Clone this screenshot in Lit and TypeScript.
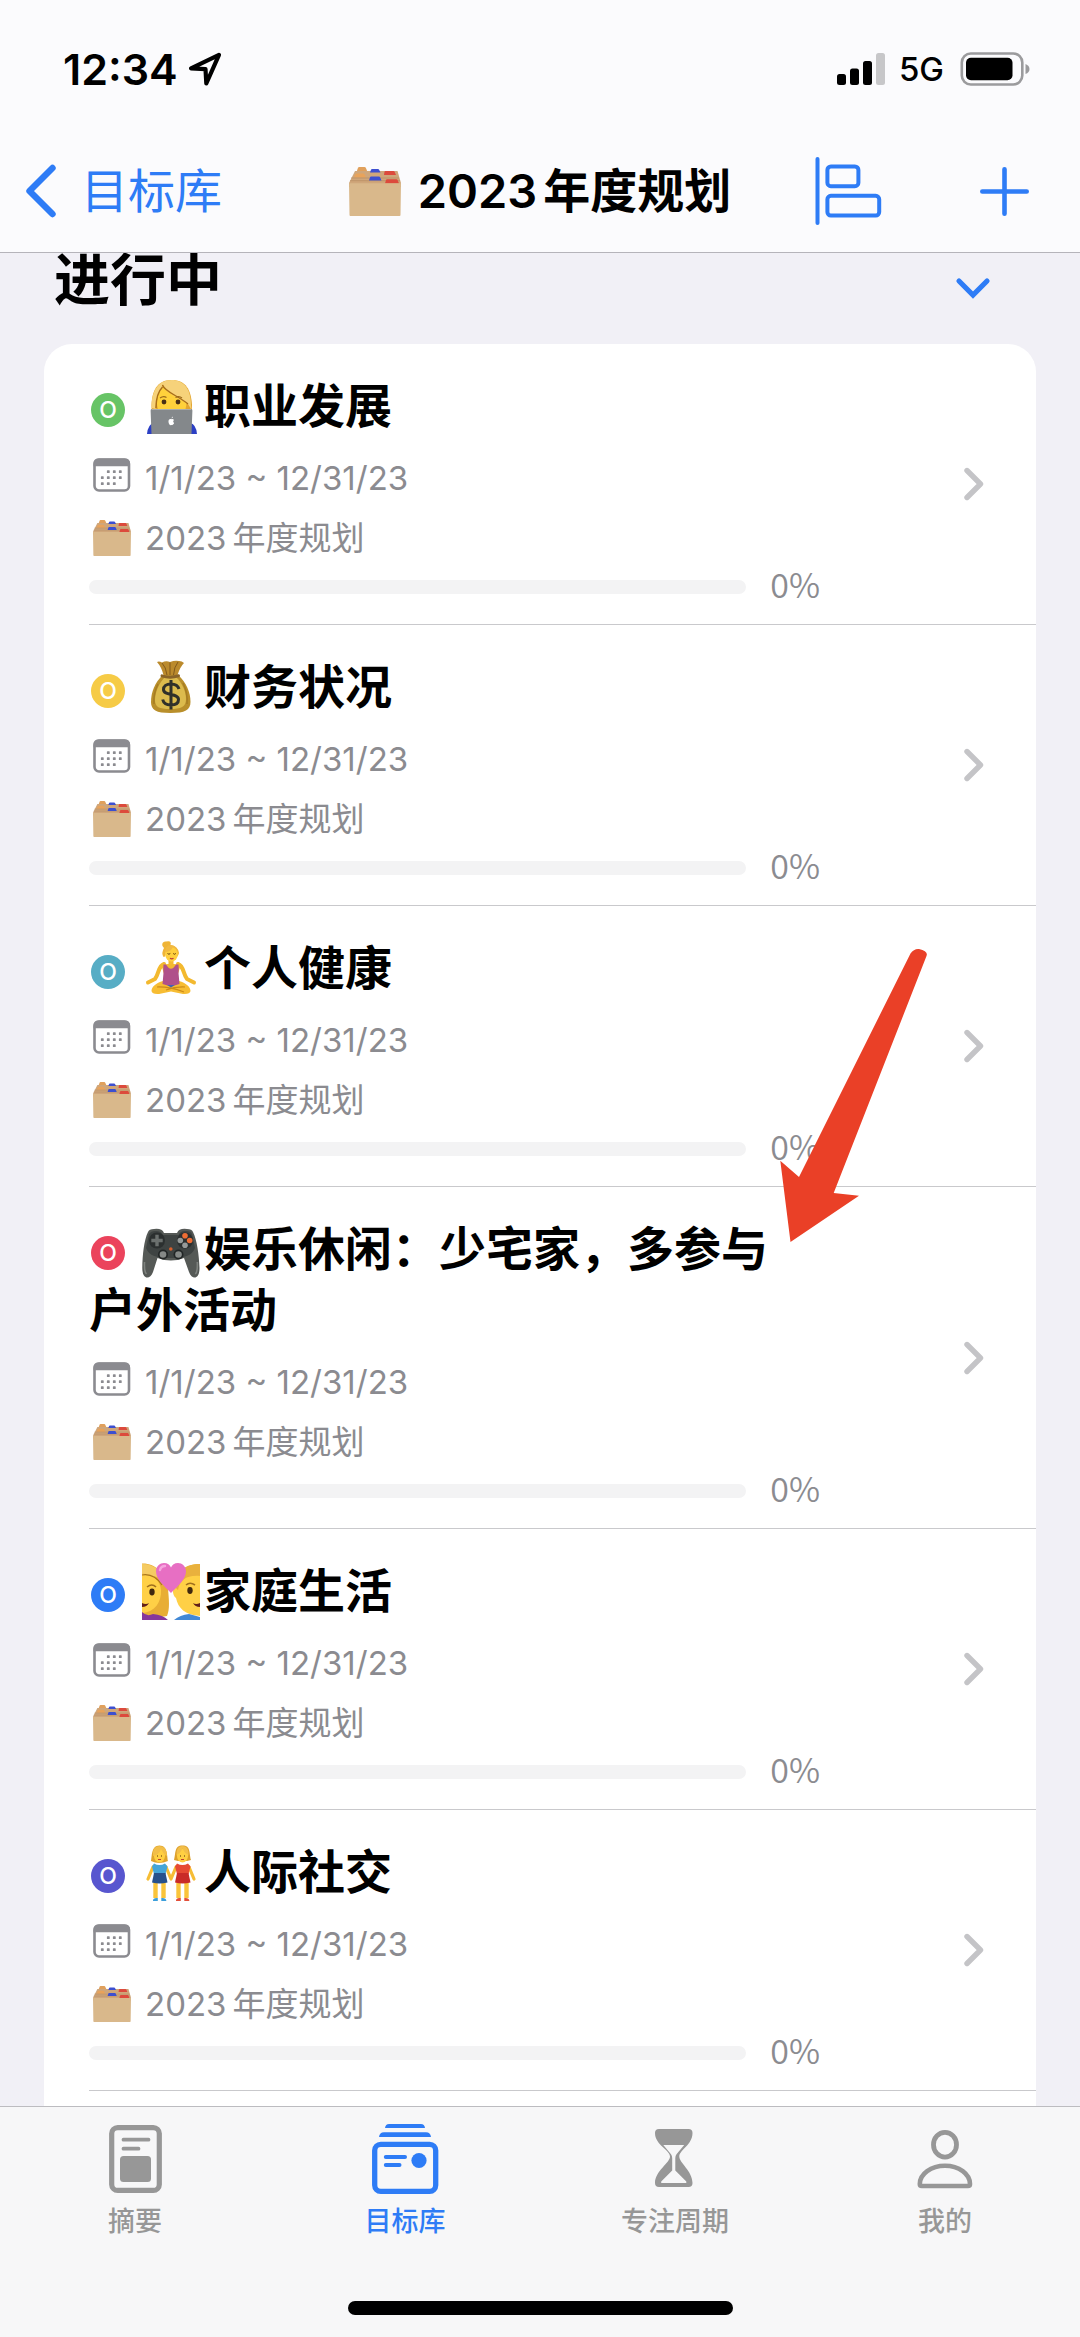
import { LitElement, html, svg, css, type TemplateResult } from "lit";
import { customElement, property } from "lit/decorators.js";
import { classMap } from "lit/directives/class-map.js";

const folderIcon = html`
  <svg class="folder" viewBox="0 0 52 49" aria-hidden="true">
    <path d="M8 3.500 9 .8Q9.400 0 10.300 0H15.500Q16.400 0 16.800.8L18 3.500V9H8Z" fill="#e0a05c" />
    <path d="M6 4H48.500L52 16V20H0V16Z" fill="#cfa67a" />
    <path d="M5 10.500 6.300 7.300Q6.700 6.500 7.600 6.500H14Q15 6.500 15.400 7.300L17 10.500Z" fill="#e8a35b" />
    <path d="M21 5.500 22 2.700Q22.300 2 23 2H29Q29.800 2 30.100 2.700L31.500 5.500Z" fill="#3c4fd0" />
    <path d="M35 8 35.500 4.800Q35.700 4 36.500 4H44.500Q45.300 4 45.600 4.800L47 8Z" fill="#dc4a3c" />
    <path d="M2 11H50M1 13.700H51" stroke="#b98f66" stroke-width=".8" />
    <path d="M20 13.500 21 10.300Q21.300 9.500 22 9.500H30Q30.800 9.500 31.100 10.300L32.500 13.500Z" fill="#3c4fd0" />
    <path d="M36 16.500 37 13.100Q37.300 12.300 38 12.300H47.500Q48.300 12.300 48.600 13.100L50 16.500Z" fill="#dc4a3c" />
    <path d="M0 16.300H52L51.500 48Q51.500 49 50.500 49H1.500Q.5 49 .5 48Z" fill="#d9b88b" />
  </svg>
`;

const calendarIcon = html`
  <svg class="calendar" viewBox="0 0 38 40" aria-hidden="true">
    <rect x="1.500" y="1.500" width="34.500" height="31" rx="4.500" fill="none" stroke="#8b8b90" stroke-width="2.600" />
    <path d="M.5 8.200V5.500Q.5.500 5.500.5H32Q37 .5 37 5.500V8.200Z" fill="#8b8b90" />
    ${[
      [15.3, 13.7], [21.3, 13.7], [27.3, 13.7],
      [9.3, 19.7], [15.3, 19.7], [21.3, 19.7], [27.3, 19.7],
      [9.3, 25.7], [15.3, 25.7], [21.3, 25.7],
    ].map(([x, y]) => svg`<rect x=${x - 1.4} y=${y - 1.4} width="2.800" height="2.800" rx=".6" fill="#8b8b90" />`)}
  </svg>
`;

const technologist = svg`
  <path d="M5 57Q6 47 12 46H48Q54 47 55 57Z" fill="#2b3fc4" />
  <path d="M29.500 3C15 3 10 14 9.500 28L10 46H49L50 28C49 13 44 3 29.500 3Z" fill="#e3a52f" />
  <path d="M29.500 8C19 8 15 17 15 26C15 34 20 42 29.500 42C39 42 44.500 35 44.500 25C44.500 15 40 8 29.500 8Z" fill="#ffd13b" />
  <path d="M20.500 7C22 15 33 19 46 27L49 32C50 12 42 3 29.500 3C16 3 9.500 14 9.500 31L13.500 32C13.500 24 15.500 16 20.500 11Z" fill="#f6d27a" />
  <path d="M20.500 8C23 15 35 18 46 27M20.500 10C15.500 15 14 23 14 31" fill="none" stroke="#a96e17" stroke-width="1.400" />
  <circle cx="22" cy="25" r="2.400" fill="#4a3015" /><circle cx="36" cy="25" r="2.400" fill="#4a3015" />
  <path d="M18 21Q21.500 18.500 24.500 20.500M33.500 20.500Q37 18.500 40 21" fill="none" stroke="#9b6a1a" stroke-width="1.200" />
  <path d="M10 32H49Q50.500 32 50.400 33.500L49.500 57H9.500L8.600 33.500Q8.600 32 10 32Z" fill="#84888b" />
  <path d="M10 32.500H49" stroke="#a9acae" stroke-width="1" />
  <path d="M29.300 42.200C27.500 41.600 26.300 43 26.500 45C26.700 47 28 48.600 29.300 48C30.700 48.600 31.800 47.200 32.100 46.100C30.900 45.300 30.900 43.700 32 43C31.300 41.900 30.300 41.800 29.300 42.200ZM29.500 41.500Q29.600 39.800 31 39.400Q31 41 29.500 41.500Z" fill="#fff" />
`;

const moneyBag = svg`
  <path d="M15 4Q17 3 20 4.500Q24 2.500 28 4Q33 2 37 3Q40 3 42 5Q38 9 35.500 17H21.500Q19.500 9 15 4Z" fill="#bb8a2c" />
  <path d="M20 5Q24 9 25 17M28 4.500V17M36 4Q32 9 31.500 17" stroke="#81591b" stroke-width="1" fill="none" />
  <path d="M21 17C13 24 9 34 9 44C9 52 14 55 28.500 55C43 55 48.500 52 48.500 44C48.500 34 44 24 36 17Z" fill="#b98f2b" />
  <path d="M23 19C17 25 13 34 13 42C13 49 17 51 28 51C39 51 44 49 44 41C44 33 40 25 34 19Z" fill="#dcbb4d" />
  <path d="M16 26Q11 36 12 46M41 25Q46 35 45 46" stroke="#a67d22" stroke-width="1.500" fill="none" />
  <path d="M20 17.800Q28 20.500 36.500 17.800" stroke="#8a6428" stroke-width="3" stroke-linecap="round" fill="none" />
  <path d="M37 31C36 27.500 33 26 28.800 26C24.500 26 21.500 28.200 21.500 31.500C21.500 38.500 36.500 34.500 36.500 41.500C36.500 45 33.500 47 28.800 47C24.500 47 21.500 45 20.700 41.500M29 22V51.500" stroke="#30302a" stroke-width="3" fill="none" />
`;

const yoga = svg`
  <path d="M22 25C16 27 17 35 13 40L6 43.500M36 25C42 27 41 35 45 40L52 43.500" fill="none" stroke="#f3b92f" stroke-width="4" stroke-linecap="round" stroke-linejoin="round" />
  <path d="M21 42C14 44 9.500 48 9.500 52Q10 55.500 17 55L29 52.500L41 55Q48 55.500 48.500 52C48.500 48 44 44 37 42Z" fill="#f7bd33" />
  <path d="M15 48Q27 47.500 42 53M43 48Q33 47.500 24 51" stroke="#cc8b19" stroke-width="1.200" fill="none" />
  <path d="M26.500 20H31.500V25Q37.500 25 38 28Q37 32 36 35H22Q21 32 20 28Q20.500 25 26.500 25Z" fill="#f3b92f" />
  <path d="M21.500 25.500H24Q29 34 34 25.500H36.500Q37 30 36.500 34L37.500 45Q29 48.500 20.500 45L21.500 34Q21 30 21.500 25.500Z" fill="#b0508a" />
  <path d="M25 46H33L29 48.500Z" fill="#4162b5" />
  <path d="M24 2.500Q30 1 28.500 6Q36 7 37 14Q36 18 34 18L24 13Q24 18 21.500 18Q19 14 22 9Q19 6 21 3.500Q22.500 2.200 24 2.500Z" fill="#efb437" />
  <ellipse cx="29.500" cy="15.300" rx="6.300" ry="7.200" fill="#ffcf3e" />
  <path d="M23 13Q29 13 31 8Q35 10 36 14Q35 6 28.500 6Q23 7 23 13Z" fill="#f1b942" />
  <path d="M25.500 14.500Q27 16 28.300 14.500M31.200 14.500Q32.500 16 33.800 14.500" stroke="#65400c" stroke-width="1" fill="none" />
  <path d="M28 19.300Q29.800 20.400 31.500 19.300" stroke="#c03c37" stroke-width="1.200" fill="none" />
`;

const gamepad = svg`
  <path d="M6 12Q7 9 12 9Q20 8 22 13H35Q37 8 45 9Q50 9 51 12C55 20 57 35 57.500 48C57.500 60 50 60 47 52L42 38Q29 43 15.500 38L11 52C8 60 .3 60 .3 48C.5 35 2 20 6 12Z" fill="#555956" />
  <path d="M7 14Q9 11 13 11Q19 10.500 21 15H36.500Q38.500 10.500 44 11Q49 11 50 14L53 28C50 36 42 38 28.500 38C15 38 7 36 4 28Z" fill="#3e4342" />
  <path d="M2.500 42Q2 52 4.500 54M55.300 42Q55.800 52 53.300 54" stroke="#7e827e" stroke-width="1.600" fill="none" />
  <circle cx="15" cy="20.500" r="8" fill="#2b2f2f" /><circle cx="43" cy="20.500" r="8" fill="#2b2f2f" />
  <path d="M13.300 14.800H16.700V18.800H20.700V22.200H16.700V26.200H13.300V22.200H9.300V18.800H13.300Z" fill="#6b706e" />
  <circle cx="43" cy="15.800" r="2.800" fill="#ef6d34" /><circle cx="47.700" cy="20.500" r="2.800" fill="#ef6d34" />
  <circle cx="38.300" cy="20.500" r="2.800" fill="#969a99" /><circle cx="43" cy="25.200" r="2.800" fill="#969a99" />
  <circle cx="21" cy="34.500" r="5" fill="#222626" /><circle cx="36.500" cy="34.500" r="5" fill="#222626" />
  <circle cx="21" cy="34.500" r="3.300" fill="#858987" /><circle cx="36.500" cy="34.500" r="3.300" fill="#858987" />
  <circle cx="28.800" cy="29" r="1.800" fill="#d65f2c" />
`;

const couple = svg`
  <path d="M0 1.500C13 1 24 11 26 27C27 38 28 47 25 54L13 56L0 58Z" fill="#e8ae35" />
  <path d="M0 12C9 10 18 17 19 28C19.500 40 13 50 0 51Z" fill="#ffd046" />
  <path d="M0 2C12 2 20 9 22 17C12 15 5 11 0 12Z" fill="#f5cb62" />
  <path d="M0 13Q12 11 20 23" stroke="#a8741d" stroke-width="1.200" fill="none" />
  <path d="M0 50Q5 55 11 52Q21 53 26 58H0Z" fill="#86379c" />
  <path d="M58 2C44 2 34 10 33 23C30 25 30 33 34 36C36 46 43 53 58 54Z" fill="#ffd046" />
  <path d="M58 2C43 2 34 9 33 25L36 28C38 18 44 13 58 14Z" fill="#e9b13d" />
  <path d="M32 58Q38 53 47 52L58 55V58Z" fill="#4389d5" />
  <ellipse cx="10" cy="30" rx="2.700" ry="3.400" fill="#40280f" /><ellipse cx="48" cy="28.500" rx="2.700" ry="3.400" fill="#40280f" />
  <path d="M5 25Q10 21 14 25M44 23Q48 19.500 53 23" stroke="#a1701d" stroke-width="1.600" fill="none" />
  <path d="M0 41Q4 43 7 41Q5 45 0 45ZM58 41Q54 43 51 41Q53 45 58 45Z" fill="#632019" />
  <path d="M29 31C22 24 14 17 14 9.500C14 4 18 1 22 1C25.500 1 28 3 29 5.500C30 3 32.500 1 36 1C40 1 44 4 44 9.500C44 17 36 24 29 31Z" fill="#e76fc3" />
  <path d="M18 8Q19 4 23 4" stroke="#f6a5df" stroke-width="2.400" stroke-linecap="round" fill="none" />
`;

const friends = svg`
  <path d="M11 24L6 36M24 24L29 36L34 24M47 24L52 36" stroke="#f6bd35" stroke-width="3.200" stroke-linecap="round" stroke-linejoin="round" fill="none" />
  <path d="M13.500 38V55M21.500 38V55M36.500 38V55M44.500 38V55" stroke="#fac43a" stroke-width="4.400" fill="none" />
  <path d="M17.500 2.500C9 2.500 10 14 9 18Q17 22 26 18C25 14 26 2.500 17.500 2.500Z" fill="#dfa42c" />
  <ellipse cx="17.500" cy="12.500" rx="5.600" ry="7" fill="#ffcf42" />
  <path d="M11 13Q17 12 19 6Q22 12 25 13Q25 3 17.500 3Q10 3 11 13Z" fill="#f2be49" />
  <path d="M40.500 2.500C32 2.500 34 10 32 17L36 18H45L49 17C47 10 49 2.500 40.500 2.500Z" fill="#dda02b" />
  <ellipse cx="40.500" cy="12.500" rx="5.600" ry="7" fill="#ffcf42" />
  <path d="M34.500 12Q39 10 40.500 5Q42 10 46.500 12Q47 3 40.500 3Q34 3 34.500 12Z" fill="#f2be49" />
  <path d="M15.500 13H16M19.500 13H20M38.500 13H39M42.500 13H43" stroke="#50310d" stroke-width="1.800" />
  <path d="M16 16.500H19M39 16.500H42" stroke="#bd4132" stroke-width="1" />
  <path d="M12 20.500Q17.500 23.500 23 20.500L25.500 23.500L23.500 31H12L10 23.500Z" fill="#44a5d8" />
  <path d="M12 30H23.500L25.500 39.500Q17.500 41.500 10 39.500Z" fill="#28518b" />
  <path d="M35 20.500Q40.500 23.500 46 20.500L48.500 23.500L46.500 31H35L33 23.500Z" fill="#e64a34" />
  <path d="M35 30H46.500L48.500 39.500Q40.500 41.500 33 39.500Z" fill="#c92b28" />
  <path d="M11 57.500Q11 54.500 15.800 55V58.500H11ZM19.300 55Q24 54.500 24.300 57.500V58.500H19.300Z" fill="#3c9fdb" />
  <path d="M34 57.500Q34 54.500 38.800 55V58.500H34ZM42.300 55Q47 54.500 47.300 57.500V58.500H42.300Z" fill="#e34f3a" />
`;

interface Goal {
  title: string;
  tone: string;
  emoji: TemplateResult<2>;
  progress: number;
}

const goals: Goal[] = [
  { title: "职业发展", tone: "green", emoji: technologist, progress: 0 },
  { title: "财务状况", tone: "yellow", emoji: moneyBag, progress: 0 },
  { title: "个人健康", tone: "teal", emoji: yoga, progress: 0 },
  { title: "娱乐休闲：少宅家，多参与户外活动", tone: "red", emoji: gamepad, progress: 0 },
  { title: "家庭生活", tone: "blue", emoji: couple, progress: 0 },
  { title: "人际社交", tone: "indigo", emoji: friends, progress: 0 },
];

const tabs: { label: string; active?: boolean; icon: TemplateResult<2> }[] = [
  {
    label: "摘要",
    icon: svg`
      <rect x="14.700" y="7.600" width="47.600" height="62.800" rx="6" fill="none" stroke="currentColor" stroke-width="5.200" />
      <path d="M26.500 19.700H51.500M26.500 28.700H41.500" stroke="currentColor" stroke-width="3.800" stroke-linecap="round" />
      <rect x="23" y="36" width="31" height="26" rx="3.500" fill="currentColor" />`,
  },
  {
    label: "目标库",
    active: true,
    icon: svg`
      <path d="M18 8Q18.500 4 22 4H54Q57.500 4 58 8Z" fill="currentColor" />
      <path d="M12 17Q12.500 12.300 17 12.300H59Q63.500 12.300 64 17Z" fill="currentColor" />
      <rect x="7.700" y="24.400" width="61" height="46.900" rx="6" fill="none" stroke="currentColor" stroke-width="5.300" />
      <path d="M18.800 37H38M18.800 45H32.500" stroke="currentColor" stroke-width="4" stroke-linecap="round" />
      <circle cx="52" cy="40.500" r="7.600" fill="currentColor" />`,
  },
  {
    label: "专注周期",
    icon: svg`
      <path fill-rule="evenodd" fill="currentColor" d="M22 9H51.500Q55.500 9 55.500 13C55.500 25 42.300 30 42.300 36.500C42.300 43 55.500 51 55.500 63Q55.500 67 51.500 67H22Q18 67 18 63C18 51 33 43 33 36.500C33 30 18 25 18 13Q18 9 22 9ZM26.300 25 34 34.300Q35.200 36 35.200 38V50.500L24.200 61.500V63H49.300V61.500L38.300 50.500V38Q38.300 36 39.500 34.300L47.200 25Z" />`,
  },
  {
    label: "我的",
    icon: svg`
      <ellipse cx="38" cy="24.700" rx="11.500" ry="12.400" fill="none" stroke="currentColor" stroke-width="4.800" />
      <path d="M12.800 64C12.800 54 24 45.700 38 45.700C52 45.700 63 54 63 64Q63 66 61 66H14.800Q12.800 66 12.800 64Z" fill="none" stroke="currentColor" stroke-width="4.600" />`,
  },
];

@customElement("goal-row")
export class GoalRow extends LitElement {
  @property({ attribute: false }) goal!: Goal;

  static styles = css`
    :host {
      display: block;
      padding-left: 45px;
    }
    .row {
      display: flex;
      align-items: center;
      gap: 144px;
      padding: 17px 52px 17px 0;
      border-bottom: 1px solid #c9c9cc;
      color: #8b8b90;
      text-decoration: none;
    }
    .body {
      flex: 1;
      min-width: 0;
      padding-top: 14px;
    }
    .title {
      margin: 0 0 22px;
      padding-right: 16px;
      color: #000;
      font-size: 47px;
      font-weight: 600;
      line-height: 61px;
    }
    .badge {
      display: inline-flex;
      align-items: center;
      justify-content: center;
      width: 34px;
      height: 34px;
      margin: 0 17px 0 2px;
      border-radius: 50%;
      color: #fff;
      font-size: 23px;
      font-weight: 500;
      line-height: 34px;
      vertical-align: middle;
    }
    .green { background: #67c466; }
    .yellow { background: #f6cb46; }
    .teal { background: #57adc5; }
    .red { background: #eb435c; }
    .blue { background: #2e7cf6; }
    .indigo { background: #5856cf; }
    .emoji {
      width: 58px;
      height: 58px;
      margin-right: 4px;
      vertical-align: -12px;
    }
    .meta {
      display: flex;
      align-items: center;
      gap: 14px;
      margin: 0 0 20px;
      padding-left: 4px;
      font-size: 33px;
      line-height: 40px;
    }
    .plan {
      margin-bottom: 9px;
    }
    .year {
      margin-right: 6px;
    }
    .calendar {
      width: 38px;
      height: 40px;
    }
    .folder {
      width: 38px;
      height: 36px;
    }
    .progress {
      display: flex;
      align-items: center;
      gap: 24px;
      height: 40px;
    }
    .value {
      align-self: flex-start;
      font: 350 34px/34px "Noto Sans CJK SC", sans-serif;
    }
    .track {
      flex: 1;
      height: 14px;
      border-radius: 7px;
      background: #f3f3f4;
      overflow: hidden;
    }
    .fill {
      height: 100%;
      background: #2e7cf6;
    }
    .chevron {
      width: 20px;
      height: 34px;
    }
  `;

  render() {
    const { title, tone, emoji, progress } = this.goal;
    return html`
      <a class="row" href="#goal">
        <div class="body">
          <h3 class="title"><span class=${classMap({ badge: true, [tone]: true })}>O</span><svg class="emoji" viewBox="0 0 58 58" aria-hidden="true">${emoji}</svg>${title}</h3>
          <p class="meta">${calendarIcon}<span>1/1/23 ~ 12/31/23</span></p>
          <p class="meta plan">${folderIcon}<span><span class="year">2023</span>年度规划</span></p>
          <div class="progress">
            <div class="track" role="progressbar" aria-label=${title} aria-valuenow=${progress} aria-valuemin="0" aria-valuemax="100">
              <div class="fill" style="width:${progress}%"></div>
            </div>
            <span class="value">${progress}%</span>
          </div>
        </div>
        <svg class="chevron" viewBox="0 0 20 34" aria-hidden="true">
          <path d="M3 3.500 16.500 17 3 30.500" fill="none" stroke="#c4c4c7" stroke-width="5.400" stroke-linecap="round" stroke-linejoin="round" />
        </svg>
      </a>
    `;
  }
}

@customElement("app-root")
export class AppRoot extends LitElement {
  static styles = css`
    :host {
      display: flex;
      flex-direction: column;
      position: relative;
      height: 100vh;
      background: #f1f0f6;
      color: #000;
      font-family: Inter, "Noto Sans CJK SC", sans-serif;
    }
    button {
      margin: 0;
      padding: 0;
      border: 0;
      background: none;
      color: inherit;
      font: inherit;
    }
    svg {
      display: block;
      flex: none;
    }
    .header {
      flex: none;
      background: #fbfbfd;
      border-bottom: 1px solid #b5b4ba;
    }
    .status {
      display: flex;
      align-items: center;
      height: 50px;
      padding: 44px 50px 34px 63px;
    }
    .time {
      font-size: 43px;
      font-weight: 600;
      line-height: 50px;
    }
    .location {
      width: 34px;
      height: 34px;
      margin-left: 10px;
    }
    .signal {
      width: 48px;
      height: 32px;
      margin-left: auto;
    }
    .network {
      margin: 0 16px 0 14px;
      font-size: 33px;
      font-weight: 500;
      line-height: 50px;
    }
    .battery {
      width: 70px;
      height: 34px;
    }
    .nav {
      display: grid;
      grid-template-columns: 1fr auto 1fr;
      align-items: center;
      height: 122px;
      padding-top: 2px;
    }
    .back {
      display: flex;
      align-items: center;
      gap: 25px;
      padding-left: 25px;
      color: #2e7cf6;
      font-size: 47px;
      line-height: 60px;
      text-decoration: none;
    }
    .back-icon {
      width: 31px;
      height: 54px;
    }
    .heading {
      display: flex;
      align-items: center;
      gap: 17px;
      margin: 0;
      font-size: 47px;
      font-weight: 600;
      line-height: 60px;
    }
    .year {
      margin-right: 6px;
    }
    .folder {
      width: 52px;
      height: 49px;
    }
    .actions {
      display: flex;
      align-items: center;
      justify-content: flex-end;
      gap: 98px;
      padding-right: 51px;
    }
    .align-icon {
      width: 67px;
      height: 68px;
    }
    .plus-icon {
      width: 49px;
      height: 49px;
    }
    .list {
      flex: 1;
      min-height: 0;
      display: flex;
      flex-direction: column;
      overflow: hidden;
    }
    .section {
      flex: none;
      display: flex;
      align-items: flex-end;
      justify-content: space-between;
      padding: 3px 89px 40px 54px;
    }
    .section-title {
      margin: 0;
      font-size: 56px;
      font-weight: 600;
      line-height: 48px;
    }
    .toggle {
      padding-bottom: 5px;
    }
    .toggle-icon {
      width: 36px;
      height: 22px;
    }
    .card {
      flex: 1 0 auto;
      margin: 0 44px;
      padding: 0;
      border-radius: 28px 28px 0 0;
      background: #fff;
      list-style: none;
    }
    .tabbar {
      flex: none;
      border-top: 1px solid #bcbcc0;
      background: #f7f7f8;
      padding-bottom: 22px;
    }
    .tabs {
      display: grid;
      grid-template-columns: repeat(4, 1fr);
      padding: 13px 0 62px;
    }
    .tab {
      display: flex;
      flex-direction: column;
      align-items: center;
      gap: 9px;
      color: #979797;
      font-size: 27px;
      font-weight: 500;
      line-height: 34px;
      text-decoration: none;
    }
    .tab.active {
      color: #2e7cf6;
    }
    .tab-icon {
      width: 76px;
      height: 76px;
    }
    .home {
      width: 385px;
      height: 14px;
      margin: 0 auto;
      border-radius: 7px;
      background: #000;
    }
    .arrow {
      position: absolute;
      left: 780px;
      top: 948px;
      width: 148px;
      height: 296px;
      pointer-events: none;
    }
  `;

  render() {
    return html`
      <header class="header">
        <div class="status">
          <span class="time">12:34</span>
          <svg class="location" viewBox="0 0 34 34" aria-hidden="true">
            <path d="M31 2.800 3 16.300 17.500 17.200 18.300 31.500Z" fill="none" stroke="#000" stroke-width="4.200" stroke-linejoin="round" />
          </svg>
          <svg class="signal" viewBox="0 0 48 32" aria-hidden="true">
            <rect x="0" y="21" width="9" height="11" rx="2.500" />
            <rect x="13" y="15.500" width="9" height="16.500" rx="2.500" />
            <rect x="26" y="8" width="9" height="24" rx="2.500" />
            <rect x="39" y="0" width="9" height="32" rx="2.500" fill="#c7c7c9" />
          </svg>
          <span class="network">5G</span>
          <svg class="battery" viewBox="0 0 70 34" aria-hidden="true">
            <rect x="1.800" y="1.500" width="60.500" height="31" rx="9" fill="none" stroke="#9b9b9d" stroke-width="2.600" />
            <rect x="6" y="5.700" width="46.500" height="22.600" rx="5" />
            <path d="M65.500 12Q69.500 13.500 69.500 17Q69.500 20.500 65.500 22Z" fill="#9b9b9d" />
          </svg>
        </div>
        <nav class="nav">
          <a class="back" href="#library">
            <svg class="back-icon" viewBox="0 0 31 54" aria-hidden="true">
              <path d="M27.500 4 4.500 27 27.500 50" fill="none" stroke="currentColor" stroke-width="6.400" stroke-linecap="round" stroke-linejoin="round" />
            </svg>
            <span>目标库</span>
          </a>
          <h1 class="heading">${folderIcon}<span><span class="year">2023</span>年度规划</span></h1>
          <div class="actions">
            <button type="button" aria-label="时间线">
              <svg class="align-icon" viewBox="0 0 67 68" fill="none" stroke="#2e7cf6" stroke-width="4" aria-hidden="true">
                <path d="M2.500 2V66" stroke-linecap="round" />
                <rect x="12.400" y="9.500" width="31" height="19.700" rx="3.500" />
                <rect x="12.400" y="38.800" width="51.800" height="19.800" rx="3.500" />
              </svg>
            </button>
            <button type="button" aria-label="添加">
              <svg class="plus-icon" viewBox="0 0 49 49" aria-hidden="true">
                <path d="M24.500 2.300V46.700M2.300 24.500H46.700" stroke="#2e7cf6" stroke-width="4.600" stroke-linecap="round" />
              </svg>
            </button>
          </div>
        </nav>
      </header>
      <main class="list">
        <div class="section">
          <h2 class="section-title">进行中</h2>
          <button class="toggle" type="button" aria-label="收起">
            <svg class="toggle-icon" viewBox="0 0 36 22" aria-hidden="true">
              <path d="M4 4 18 18 32 4" fill="none" stroke="#2e7cf6" stroke-width="5.200" stroke-linecap="round" stroke-linejoin="miter" />
            </svg>
          </button>
        </div>
        <ul class="card">
          ${goals.map((goal) => html`<li><goal-row .goal=${goal}></goal-row></li>`)}
        </ul>
      </main>
      <footer class="tabbar">
        <nav class="tabs">
          ${tabs.map(
            (tab) => html`
              <a class=${classMap({ tab: true, active: !!tab.active })} href="#tab">
                <svg class="tab-icon" viewBox="0 0 76 76" aria-hidden="true">${tab.icon}</svg>
                <span>${tab.label}</span>
              </a>
            `,
          )}
        </nav>
        <div class="home"></div>
      </footer>
      <svg class="arrow" viewBox="0 0 148 296" aria-hidden="true">
        <path d="M10.500 294 .3 212.700 19 229 130.500 5.500Q134 .5 139 1Q148.500 3 146.500 8L53.700 245 79 247.700Z" fill="#ea4027" />
      </svg>
    `;
  }
}
